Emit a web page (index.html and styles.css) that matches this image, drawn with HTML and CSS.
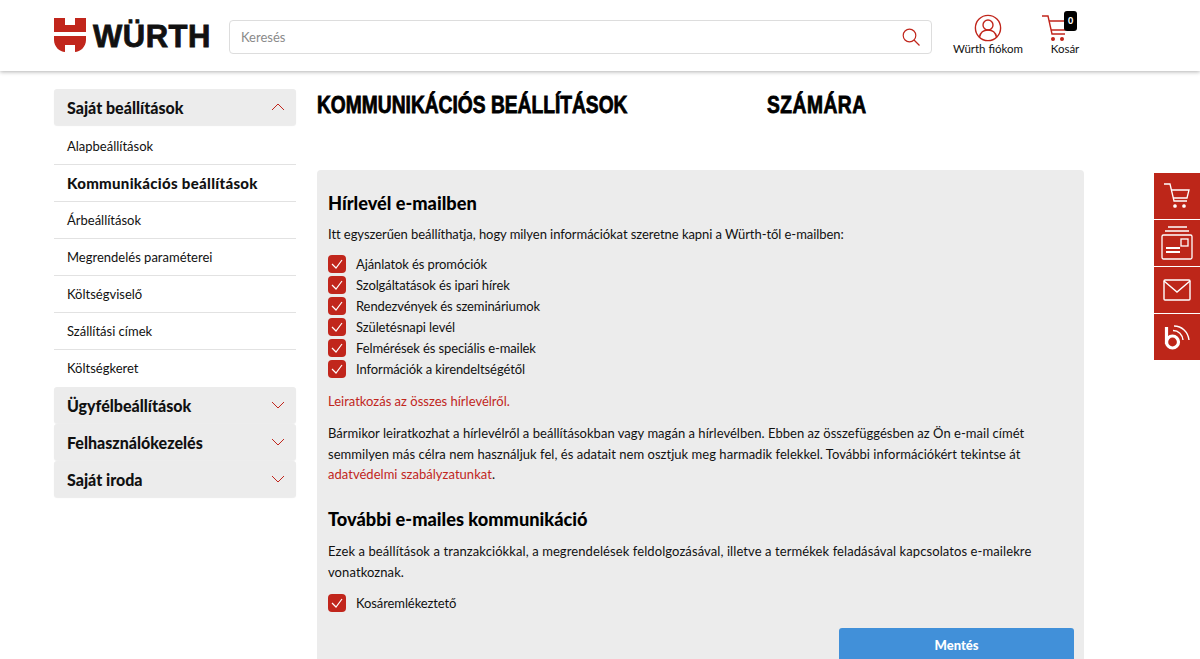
FILE: index.html
```html
<!DOCTYPE html>
<html lang="hu">
<head>
    <meta charset="UTF-8">
    <meta name="viewport" content="width=device-width, initial-scale=1.0">
    <title>Kommunikációs beállítások</title>
    <link rel="stylesheet" href="styles.css">
</head>
<body>
    <!-- Header -->
    <header class="header">
        <a class="logo" href="#">
            <svg class="logo-mark" width="32" height="34" viewBox="0 0 32 34">
                <path fill="#c1261c" d="M0 0h11v7h10V0h11v14H0zM0 18h32v4c0 7-6 12-11 12v-7H11v7C6 34 0 29 0 22z"/>
            </svg>
            <span class="logo-text">WÜRTH</span>
        </a>
        <div class="search">
            <span class="search-text">Keresés</span>
            <svg width="18" height="18" viewBox="0 0 18 18" fill="none" stroke="#c1261c" stroke-width="1.2">
                <circle cx="7.5" cy="7.5" r="6.3"/>
                <path d="M12 12l5.5 5.5"/>
            </svg>
        </div>
        <a class="head-link account" href="#">
            <svg width="28" height="28" viewBox="0 0 28 28" fill="none" stroke="#c1261c" stroke-width="1.4">
                <circle cx="14" cy="14" r="12.6"/>
                <circle cx="14" cy="11" r="5"/>
                <path d="M5.5 23c1-5 4.500-7 8.500-7s7.500 2 8.500 7"/>
            </svg>
            <span>Würth fiókom</span>
        </a>
        <a class="head-link cart" href="#">
            <svg class="cart-icon" width="26" height="28" viewBox="0 0 26 28" fill="none" stroke="#c1261c" stroke-width="1.4">
                <path d="M0 2h6l4 18h13"/>
                <path d="M7 7h18l-2 9H9"/>
                <circle cx="11" cy="25" r="1.300" fill="#c1261c"/>
                <circle cx="20" cy="25" r="1.300" fill="#c1261c"/>
            </svg>
            <span class="cart-badge">0</span>
            <span>Kosár</span>
        </a>
    </header>

    <div class="page">
        <!-- Sidebar -->
        <nav class="sidebar">
            <div class="side-head open">Saját beállítások
                <svg class="chev" width="14" height="8" viewBox="0 0 14 8"><path d="M1 7l6-6 6 6"/></svg>
            </div>
            <a class="side-item" href="#">Alapbeállítások</a>
            <a class="side-item active" href="#">Kommunikációs beállítások</a>
            <a class="side-item" href="#">Árbeállítások</a>
            <a class="side-item" href="#">Megrendelés paraméterei</a>
            <a class="side-item" href="#">Költségviselő</a>
            <a class="side-item" href="#">Szállítási címek</a>
            <a class="side-item last" href="#">Költségkeret</a>
            <div class="side-head">Ügyfélbeállítások
                <svg class="chev" width="14" height="8" viewBox="0 0 14 8"><path d="M1 1l6 6 6-6"/></svg>
            </div>
            <div class="side-head">Felhasználókezelés
                <svg class="chev" width="14" height="8" viewBox="0 0 14 8"><path d="M1 1l6 6 6-6"/></svg>
            </div>
            <div class="side-head">Saját iroda
                <svg class="chev" width="14" height="8" viewBox="0 0 14 8"><path d="M1 1l6 6 6-6"/></svg>
            </div>
        </nav>

        <!-- Main content -->
        <main class="main">
            <h1 class="title"><span class="title-left">KOMMUNIKÁCIÓS BEÁLLÍTÁSOK</span><span class="title-right">SZÁMÁRA</span></h1>

            <section class="panel">
                <h2>Hírlevél e-mailben</h2>
                <p class="intro">Itt egyszerűen beállíthatja, hogy milyen információkat szeretne kapni a Würth-től e-mailben:</p>

                <ul class="checks">
                    <li><span class="check"><svg width="12" height="10" viewBox="0 0 12 10"><path d="M1 5l4 4 6-8"/></svg></span>Ajánlatok és promóciók</li>
                    <li><span class="check"><svg width="12" height="10" viewBox="0 0 12 10"><path d="M1 5l4 4 6-8"/></svg></span>Szolgáltatások és ipari hírek</li>
                    <li><span class="check"><svg width="12" height="10" viewBox="0 0 12 10"><path d="M1 5l4 4 6-8"/></svg></span>Rendezvények és szemináriumok</li>
                    <li><span class="check"><svg width="12" height="10" viewBox="0 0 12 10"><path d="M1 5l4 4 6-8"/></svg></span>Születésnapi levél</li>
                    <li><span class="check"><svg width="12" height="10" viewBox="0 0 12 10"><path d="M1 5l4 4 6-8"/></svg></span>Felmérések és speciális e-mailek</li>
                    <li><span class="check"><svg width="12" height="10" viewBox="0 0 12 10"><path d="M1 5l4 4 6-8"/></svg></span>Információk a kirendeltségétől</li>
                </ul>

                <p class="unsub"><a href="#">Leiratkozás az összes hírlevélről.</a></p>

                <p class="info">Bármikor leiratkozhat a hírlevélről a beállításokban vagy magán a hírlevélben. Ebben az összefüggésben az Ön e-mail címét semmilyen más célra nem használjuk fel, és adatait nem osztjuk meg harmadik felekkel. További információkért tekintse át <a href="#">adatvédelmi szabályzatunkat</a>.</p>

                <h2 class="second">További e-mailes kommunikáció</h2>
                <p class="info wide">Ezek a beállítások a tranzakciókkal, a megrendelések feldolgozásával, illetve a termékek feladásával kapcsolatos e-mailekre vonatkoznak.</p>

                <ul class="checks single">
                    <li><span class="check"><svg width="12" height="10" viewBox="0 0 12 10"><path d="M1 5l4 4 6-8"/></svg></span>Kosáremlékeztető</li>
                </ul>

                <div class="actions">
                    <button class="save-btn">Mentés</button>
                </div>
            </section>
        </main>
    </div>

    <!-- Right side toolbar -->
    <aside class="tools">
        <a class="tool" href="#">
            <svg width="28" height="26" viewBox="0 0 28 26" fill="none" stroke="#fff" stroke-width="1.3">
                <path d="M1 1h6l4 17h13"/>
                <path d="M8 7h18l-2 8H10"/>
                <circle cx="12" cy="23" r="1.200" fill="#fff"/>
                <circle cx="21" cy="23" r="1.200" fill="#fff"/>
            </svg>
        </a>
        <a class="tool" href="#">
            <svg width="32" height="34" viewBox="0 0 32 34" fill="none" stroke="#fff" stroke-width="1.3">
                <path d="M7 1h19M4 5h24"/>
                <rect x="1" y="9" width="30" height="24" rx="1.500"/>
                <rect x="20" y="13" width="7" height="7"/>
                <path d="M5 22h14M5 26h14" stroke-width="2"/>
            </svg>
        </a>
        <a class="tool" href="#">
            <svg width="28" height="22" viewBox="0 0 28 22" fill="none" stroke="#fff" stroke-width="1.4">
                <rect x="1" y="1" width="26" height="20" rx="1"/>
                <path d="M1 2l13 11L27 2"/>
            </svg>
        </a>
        <a class="tool" href="#">
            <svg width="30" height="30" viewBox="0 0 30 30" fill="none" stroke="#fff">
                <path d="M4.500 5v17" stroke-width="3.200"/>
                <circle cx="10.500" cy="20" r="6" stroke-width="3.200"/>
                <path d="M11 8.500c5.500 0 9.500 4 10 9.500M12 4c8 0 14 6 15 14" stroke-width="1.400"/>
            </svg>
        </a>
    </aside>
</body>
</html>
```

FILE: styles.css
```css
* {
    margin: 0;
    padding: 0;
    box-sizing: border-box;
}

html, body {
    height: 659px;
    overflow: hidden;
}

body {
    font-family: 'Lato', 'Open Sans', sans-serif;
    font-size: 13px;
    color: #111;
    background: #fff;
}

a {
    color: inherit;
    text-decoration: none;
}

/* Header */
.header {
    display: flex;
    align-items: center;
    height: 71px;
    padding: 3px 0 0 54px;
    background: #fff;
    box-shadow: 0 1px 4px rgba(0, 0, 0, 0.3);
}

.logo {
    display: flex;
    align-items: center;
    gap: 7px;
    width: 175px;
}

.logo-mark {
    margin-top: -5px;
}

.logo-text {
    font-family: 'Liberation Sans', sans-serif;
    font-weight: 700;
    font-size: 31px;
    letter-spacing: 0.5px;
    color: #111;
    -webkit-text-stroke: 0.8px #111;
}

.search {
    display: flex;
    align-items: center;
    justify-content: space-between;
    width: 703px;
    height: 34px;
    margin-right: 21px;
    padding: 0 11px;
    border: 1px solid #ddd;
    border-radius: 4px;
}

.search-text {
    color: #8a8a8a;
    font-size: 13px;
}

.head-link {
    display: flex;
    flex-direction: column;
    align-items: center;
    margin-top: -5px;
    font-size: 11.5px;
    white-space: nowrap;
}

.account {
    width: 70px;
    margin-right: 20px;
}

.cart {
    position: relative;
    width: 44px;
}

.cart-icon {
    margin-right: 20px;
}

.cart-badge {
    position: absolute;
    top: -3px;
    right: 10px;
    width: 13px;
    height: 20px;
    border-radius: 3px;
    background: #000;
    color: #fff;
    font-size: 9px;
    font-weight: 900;
    line-height: 20px;
    text-align: center;
}

/* Layout */
.page {
    display: flex;
    gap: 21px;
    padding: 18px 0 0 54px;
}

.sidebar {
    width: 242px;
    flex-shrink: 0;
}

.side-head {
    display: flex;
    align-items: center;
    justify-content: space-between;
    height: 36px;
    margin-bottom: 1px;
    padding: 0 11px 0 13px;
    border-radius: 3px;
    background: #ececec;
    box-shadow: 0 1px 1px rgba(0, 0, 0, 0.08);
    font-size: 16px;
    font-weight: 900;
}

.side-head.open {
    margin-bottom: 3px;
}

.chev {
    fill: none;
    stroke: #c1261c;
    stroke-width: 1;
}

.side-item {
    display: block;
    height: 37px;
    padding: 0 13px;
    border-bottom: 1px solid #e2e2e2;
    font-size: 13px;
    line-height: 37px;
}

.side-item.last {
    border-bottom: none;
}

.side-item.active {
    font-size: 15px;
    font-weight: 900;
    letter-spacing: 0.3px;
}

.main {
    width: 767px;
}

.title {
    display: flex;
    height: 81px;
    padding-top: 2px;
    font-family: 'Liberation Sans', sans-serif;
    font-size: 23px;
    font-weight: 700;
    line-height: 28px;
    white-space: nowrap;
    color: #000;
    -webkit-text-stroke: 0.8px #000;
}

/* no condensed heavy font here, so the heading is squeezed */
.title-left, .title-right {
    display: inline-block;
    transform: scaleX(0.835);
    transform-origin: left center;
}

.title-left {
    width: 450px;
}

.title-right {
    letter-spacing: 0.6px;
}

.panel {
    height: 520px;
    padding: 22px 10px 0 11px;
    border-radius: 4px;
    background: #ececec;
}

.panel h2 {
    font-size: 18.2px;
    font-weight: 900;
    line-height: 22px;
    color: #000;
}

.panel a {
    color: #c1261c;
}

.intro {
    margin-top: 10px;
    margin-bottom: 8px;
    letter-spacing: -0.06px;
    line-height: 21px;
}

.checks {
    list-style: none;
    letter-spacing: -0.1px;
}

.checks li {
    display: flex;
    align-items: center;
    gap: 10px;
    height: 21px;
}

.check {
    display: flex;
    align-items: center;
    justify-content: center;
    width: 18px;
    height: 18px;
    border-radius: 4px;
    background: #c1261c;
}

.check svg {
    fill: none;
    stroke: #fff;
    stroke-width: 1.2;
}

.unsub {
    margin-top: 12px;
    line-height: 21px;
}

.info {
    margin-top: 11px;
    letter-spacing: 0.03px;
    line-height: 20.7px;
}

.info.wide {
    letter-spacing: 0.09px;
}

.panel h2.second {
    margin-top: 23px;
}

.single {
    margin-top: 10px;
}

.actions {
    display: flex;
    justify-content: flex-end;
    margin-top: 14px;
}

.save-btn {
    width: 235px;
    height: 34px;
    border: none;
    border-radius: 3px;
    background: #4190d9;
    color: #fff;
    font-family: inherit;
    font-size: 13px;
    font-weight: 900;
}

/* Toolbar on the right edge */
.tools {
    position: absolute;
    top: 173px;
    right: 0;
    display: flex;
    flex-direction: column;
    gap: 1px;
    width: 46px;
}

.tool {
    display: flex;
    align-items: center;
    justify-content: center;
    height: 46px;
    background: #bd2619;
}
```
